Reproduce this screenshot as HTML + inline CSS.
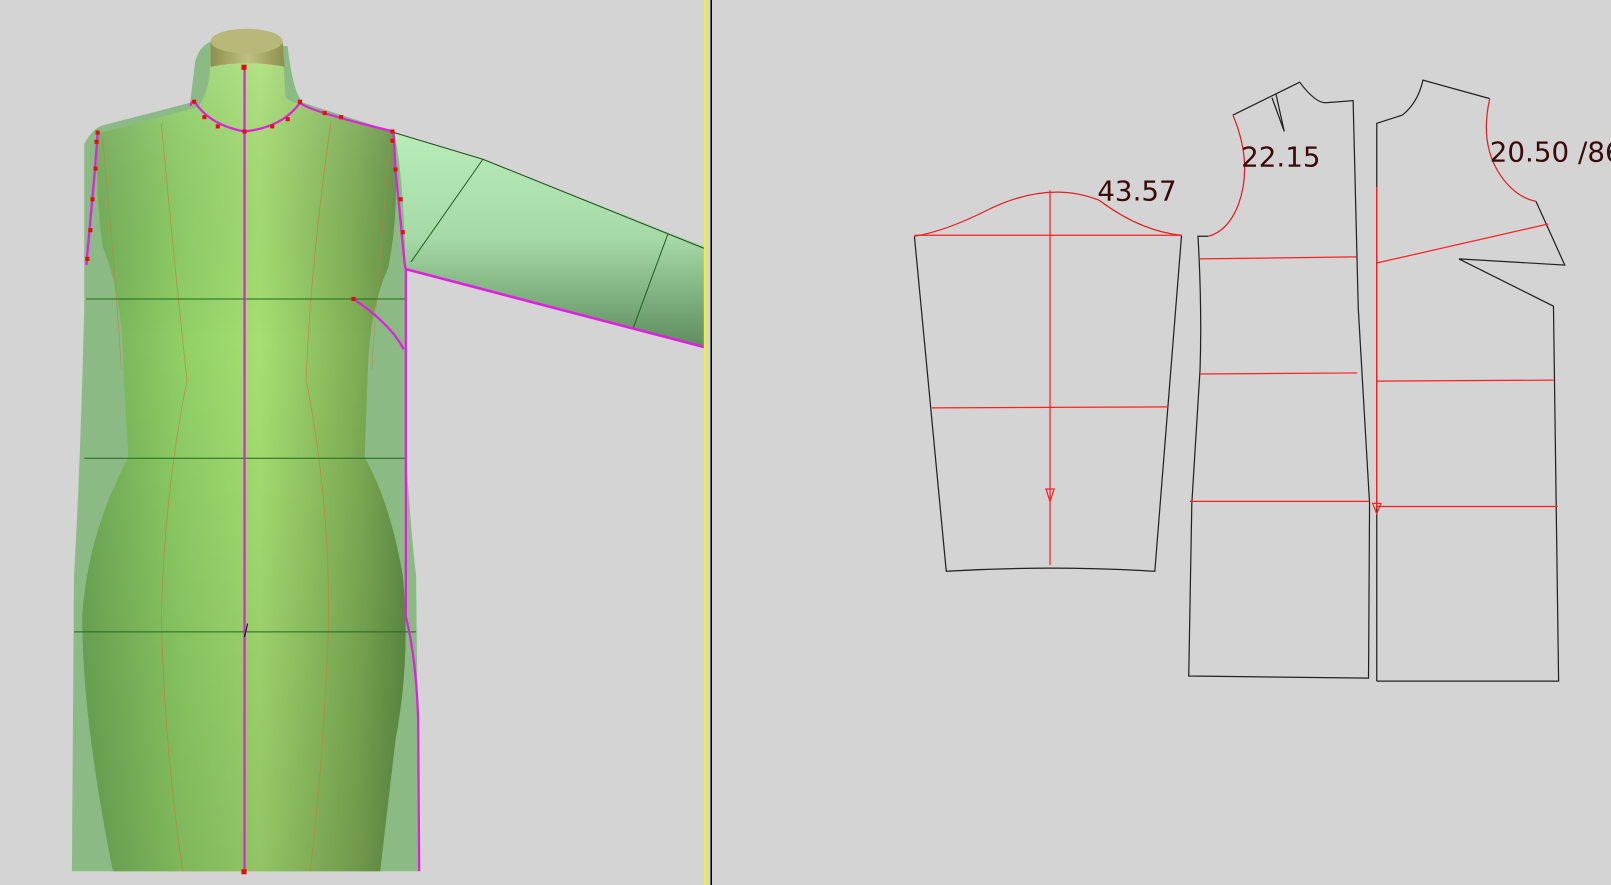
<!DOCTYPE html>
<html><head><meta charset="utf-8"><style>
html,body{margin:0;padding:0;background:#d4d4d4;width:1611px;height:885px;overflow:hidden}
svg{display:block}
text{font-family:"DejaVu Sans","Liberation Sans",sans-serif}
</style></head><body>
<svg width="1611" height="885" viewBox="0 0 1568 861.4" preserveAspectRatio="none" xmlns="http://www.w3.org/2000/svg">
<defs>
<linearGradient id="body" x1="0" x2="1" y1="0" y2="0">
<stop offset="0" stop-color="#6fa955"/><stop offset="0.3" stop-color="#8fcf66"/><stop offset="0.55" stop-color="#a6df72"/><stop offset="0.85" stop-color="#7fae55"/><stop offset="1" stop-color="#5f8f45"/></linearGradient>
<linearGradient id="bodyv" x1="0" x2="0" y1="0" y2="1">
<stop offset="0" stop-color="#fff" stop-opacity="0.15"/><stop offset="0.35" stop-color="#000" stop-opacity="0"/><stop offset="1" stop-color="#000" stop-opacity="0.12"/></linearGradient>
<linearGradient id="arm" x1="0" x2="0" y1="0" y2="1">
<stop offset="0" stop-color="#b8ecb8"/><stop offset="0.5" stop-color="#a5d9a5"/><stop offset="1" stop-color="#5e8c5e"/></linearGradient>
<linearGradient id="neck" x1="0" x2="1"><stop offset="0" stop-color="#8e8e50"/><stop offset="0.5" stop-color="#c0c080"/><stop offset="1" stop-color="#8e8e50"/></linearGradient>
</defs>
<rect width="1568" height="862" fill="#d4d4d4"/>
<!-- arm -->
<path d="M380,128 L470,155 L686,240 L686,338 L616,320 L395,262 Z" fill="url(#arm)"/>
<path d="M380,128 L470,155 L686,242" stroke="#205020" stroke-width="1" fill="none"/>
<path d="M470,155 L400,255 M650,228 L616,320" stroke="#206020" stroke-width="1" fill="none"/>
<path d="M395,262 L686,338" stroke="#e020e0" stroke-width="2.5" fill="none"/>
<!-- outer translucent garment -->
<path d="M190,60 Q195,40 215,38 L280,45 Q285,90 295,100 L383,128 Q392,160 395,262 L395,440 Q400,520 405,560 L408,848 L70,848 L72,560 Q78,460 82,300 L82,140 Q90,125 100,122 L185,100 Z" fill="#8cba85"/>
<!-- inner body -->
<path d="M205,50 L275,50 L278,95 Q290,105 383,128 Q390,200 378,260 Q360,300 358,360 L355,445 Q380,490 392,560 Q400,640 385,720 L370,848 L110,848 Q80,700 80,600 Q85,520 125,445 L120,360 Q120,290 100,240 Q92,180 95,130 L190,105 Q203,98 205,60 Z" fill="url(#body)"/>
<path d="M205,50 L275,50 L278,95 Q290,105 383,128 Q390,200 378,260 Q360,300 358,360 L355,445 Q380,490 392,560 Q400,640 385,720 L370,848 L110,848 Q80,700 80,600 Q85,520 125,445 L120,360 Q120,290 100,240 Q92,180 95,130 L190,105 Q203,98 205,60 Z" fill="url(#bodyv)"/>
<!-- neck top -->
<path d="M205,40 Q240,20 275,40 L277,65 Q240,58 205,65 Z" fill="url(#neck)"/>
<ellipse cx="240" cy="40" rx="35" ry="12" fill="#b8b878"/>
<!-- princess lines -->
<path d="M157,120 Q170,260 182,370 Q160,480 157,600 Q160,730 178,848" stroke="#c08040" stroke-width="0.8" fill="none" opacity="0.8"/>
<path d="M322,120 Q302,260 298,370 Q320,480 320,600 Q316,730 302,848" stroke="#c08040" stroke-width="0.8" fill="none" opacity="0.8"/>
<path d="M100,135 Q115,300 118,360 M380,135 Q365,300 362,360" stroke="#c08040" stroke-width="0.8" fill="none" opacity="0.6"/>
<!-- horizontals -->
<path d="M84,291 L395,291 M82,446 L395,446 M72,615 L405,615" stroke="#1c6a1c" stroke-width="1" fill="none"/>
<!-- magenta lines -->
<g stroke="#e020e0" stroke-width="2.2" fill="none">
<path d="M238,66 L238,848"/>
<path d="M190,100 Q205,122 238,128 Q275,124 292,100 Q300,108 383,128 L385,165 L394,258 L395,262 L395,600 Q405,640 407,700 L408,848"/>
<path d="M190,100 Q185,98 186,103"/>
<path d="M95,130 L92,170 L84,258"/>
<path d="M344,291 Q380,315 393,340"/>
</g>
<g fill="#e01010">
<rect x="235" y="63" width="5" height="5"/><rect x="235" y="846" width="5" height="5"/>
<rect x="187" y="97" width="4" height="4"/><rect x="197" y="112" width="4" height="4"/><rect x="210" y="121" width="4" height="4"/><rect x="236" y="126" width="4" height="4"/><rect x="263" y="121" width="4" height="4"/><rect x="278" y="114" width="4" height="4"/><rect x="290" y="97" width="4" height="4"/>
<rect x="314" y="108" width="4" height="4"/><rect x="330" y="112" width="4" height="4"/><rect x="380" y="126" width="4" height="4"/><rect x="380" y="135" width="4" height="4"/><rect x="383" y="163" width="4" height="4"/><rect x="388" y="192" width="4" height="4"/><rect x="390" y="224" width="4" height="4"/>
<rect x="93" y="127" width="4" height="4"/><rect x="92" y="136" width="4" height="4"/><rect x="91" y="162" width="4" height="4"/><rect x="88" y="192" width="4" height="4"/><rect x="86" y="222" width="4" height="4"/><rect x="83" y="250" width="4" height="4"/>
<rect x="342" y="289" width="4" height="4"/>
</g>
<path d="M238,620 L241,607" stroke="#000" stroke-width="1"/>
<!-- divider -->
<rect x="685" y="0" width="4" height="862" fill="#e8e860"/>
<rect x="691.5" y="0" width="1.5" height="862" fill="#000"/>
<!-- sleeve -->
<g fill="none" stroke-width="1.2">
<path d="M890,230 L921,556 Q1020,550 1124,556 L1150,229" stroke="#222"/>
<path d="M890,230 Q920,225 960,205 Q1020,175 1070,195 Q1110,225 1150,229" stroke="#e02020"/>
<path d="M890,229 L1150,229 M907,397 L1137,396 M1022,185 L1022,550" stroke="#ff2020"/>
<path d="M1018,476 L1026,476 L1022,488 Z" stroke="#ff2020"/>
<!-- front piece -->
<path d="M1200,112 L1265,80 Q1280,100 1290,100 L1317,98 L1322,300 L1333,490 L1332,660 L1157,658 L1160,490 L1168,360 Q1170,300 1166,230 L1176,230" stroke="#222"/>
<path d="M1200,112 Q1220,160 1205,200 Q1195,225 1176,230" stroke="#e02020"/>
<path d="M1238,95 L1250,128 L1242,92" stroke="#222"/>
<path d="M1168,252 L1320,250 M1168,364 L1321,363 M1158,488 L1332,488" stroke="#ff2020"/>
<!-- back piece -->
<path d="M1340,663 L1340,120 L1365,112 Q1380,100 1385,78 L1450,96 M1495,196 L1523,258 L1420,252 L1512,298 L1517,663 L1340,663" stroke="#222"/>
<path d="M1450,96 Q1440,140 1460,170 Q1475,192 1495,196" stroke="#e02020"/>
<path d="M1340,182 L1340,495 M1340,256 L1507,218 M1340,371 L1512,370 M1340,493 L1516,493" stroke="#ff2020"/>
<path d="M1336,490 L1344,490 L1340,500 Z" stroke="#ff2020"/>
</g>
<g fill="#3a0a0a" font-size="27">
<text x="1068" y="195">43.57</text>
<text x="1208" y="162">22.15</text>
<text x="1450" y="157">20.50 /86</text>
</g>
</svg>
</body></html>
